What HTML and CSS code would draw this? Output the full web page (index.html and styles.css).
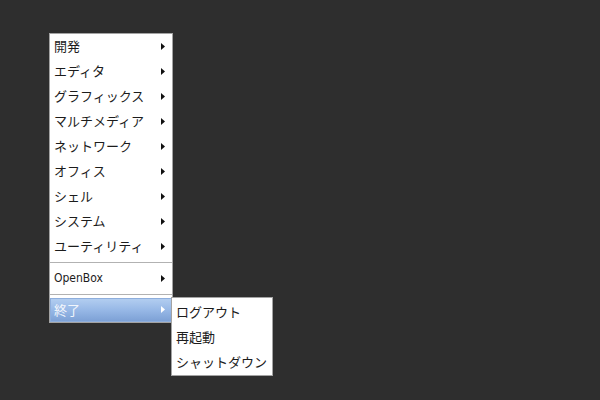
FILE: index.html
```html
<!DOCTYPE html>
<html lang="ja">
<head>
<meta charset="utf-8">
<title>Menu</title>
<link rel="stylesheet" href="styles.css">
</head>
<body>
<div class="desktop">
  <div class="menu">
    <div class="item"><span class="label">開発</span><svg class="arrow" width="4" height="7" viewBox="0 0 4 7"><polygon points="0,0 4,3.5 0,7"/></svg></div>
    <div class="item"><span class="label">エディタ</span><svg class="arrow" width="4" height="7" viewBox="0 0 4 7"><polygon points="0,0 4,3.5 0,7"/></svg></div>
    <div class="item"><span class="label">グラフィックス</span><svg class="arrow" width="4" height="7" viewBox="0 0 4 7"><polygon points="0,0 4,3.5 0,7"/></svg></div>
    <div class="item"><span class="label">マルチメディア</span><svg class="arrow" width="4" height="7" viewBox="0 0 4 7"><polygon points="0,0 4,3.5 0,7"/></svg></div>
    <div class="item"><span class="label">ネットワーク</span><svg class="arrow" width="4" height="7" viewBox="0 0 4 7"><polygon points="0,0 4,3.5 0,7"/></svg></div>
    <div class="item"><span class="label">オフィス</span><svg class="arrow" width="4" height="7" viewBox="0 0 4 7"><polygon points="0,0 4,3.5 0,7"/></svg></div>
    <div class="item"><span class="label">シェル</span><svg class="arrow" width="4" height="7" viewBox="0 0 4 7"><polygon points="0,0 4,3.5 0,7"/></svg></div>
    <div class="item"><span class="label">システム</span><svg class="arrow" width="4" height="7" viewBox="0 0 4 7"><polygon points="0,0 4,3.5 0,7"/></svg></div>
    <div class="item"><span class="label">ユーティリティ</span><svg class="arrow" width="4" height="7" viewBox="0 0 4 7"><polygon points="0,0 4,3.5 0,7"/></svg></div>
    <div class="sep"></div>
    <div class="item"><span class="label latin">OpenBox</span><svg class="arrow" width="4" height="7" viewBox="0 0 4 7"><polygon points="0,0 4,3.5 0,7"/></svg></div>
    <div class="sep"></div>
    <div class="item active last"><span class="label">終了</span><svg class="arrow" width="4" height="7" viewBox="0 0 4 7"><polygon points="0,0 4,3.5 0,7"/></svg></div>

    <div class="submenu">
      <div class="item sub"><span class="label">ログアウト</span></div>
      <div class="item sub"><span class="label">再起動</span></div>
      <div class="item sub"><span class="label">シャットダウン</span></div>
    </div>
  </div>
</div>
</body>
</html>
```

FILE: styles.css
```css
html, body {
  margin: 0;
  padding: 0;
  background: #2e2e2e;
}

.desktop {
  width: 600px;
  height: 400px;
  padding: 33px 0 0 49px;
  box-sizing: border-box;
}

.menu {
  position: relative;
  width: 122px;
  background: #ffffff;
  border: 1px solid #a3a3a3;
  display: flex;
  flex-direction: column;
  font-family: "Noto Sans CJK JP", "DejaVu Sans", sans-serif;
  font-size: 13px;
  color: #1c1c1c;
}

.item {
  height: 25px;
  display: flex;
  align-items: center;
  justify-content: space-between;
  padding: 0 7px 0 4px;
  box-sizing: border-box;
}

.item.last {
  height: 24px;
}

.label {
  white-space: nowrap;
  line-height: 1;
  margin-bottom: 2px;
}

.label.latin {
  font-family: "DejaVu Sans Condensed", "DejaVu Sans", sans-serif;
  font-stretch: condensed;
  font-size: 12px;
}

.arrow {
  display: block;
  fill: #111111;
  margin-bottom: 1px;
}

.sep {
  height: 7px;
  display: flex;
  align-items: center;
}

.sep::before {
  content: "";
  display: block;
  width: 100%;
  height: 1px;
  background: #b2b2b2;
}

.item.active {
  background: linear-gradient(to bottom, #b4cff1 0%, #97b8e6 50%, #7b9fd4 100%);
  box-shadow: inset 0 0 0 1px #8eaedc;
  color: #f2f6fc;
}

.item.active .arrow {
  fill: #ffffff;
}

.submenu {
  position: absolute;
  left: 121px;
  top: 263px;
  width: 100px;
  padding-top: 2px;
  background: #ffffff;
  border: 1px solid #a3a3a3;
  display: flex;
  flex-direction: column;
}

.item.sub {
  padding: 0 4px;
  justify-content: flex-start;
}
```
